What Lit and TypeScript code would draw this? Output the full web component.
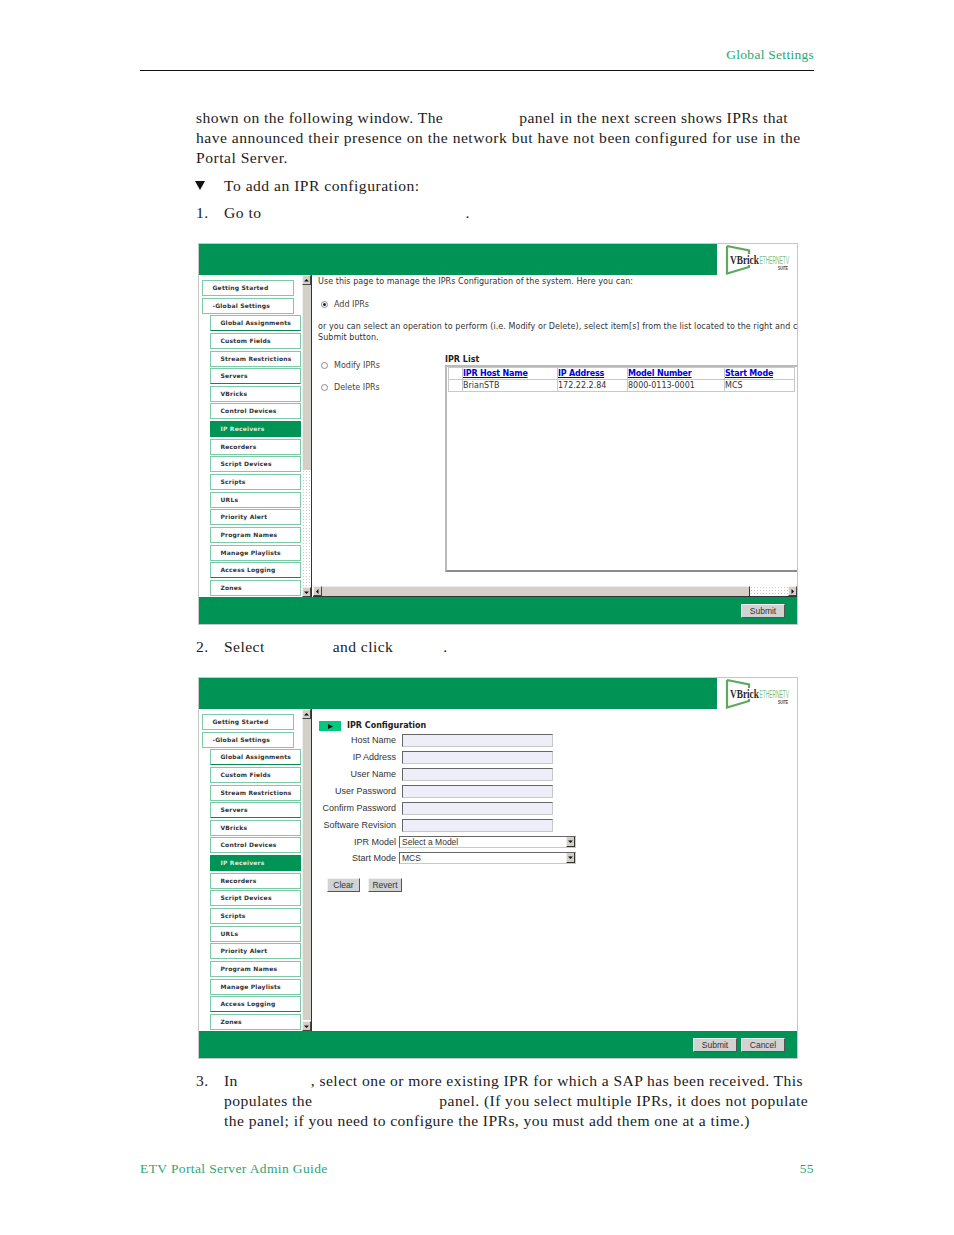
import { LitElement, html, css } from "lit";
import { customElement, property } from "lit/decorators.js";

const TOP = ["Getting Started", "-Global Settings"];
const SUB = ["Global Assignments", "Custom Fields", "Stream Restrictions", "Servers", "VBricks", "Control Devices", "IP Receivers", "Recorders", "Script Devices", "Scripts", "URLs", "Priority Alert", "Program Names", "Manage Playlists", "Access Logging", "Zones"];

const logo = html`<svg class="logo" viewBox="0 0 81 31" width="81" height="31" aria-label="VBrick EtherneTV Suite">
  <path d="M10 2 L32 6.5 V10 M32 21 V23 L10 29.5 V2" fill="none" stroke="#5fa95f" stroke-width="2.2"/>
  <text transform="translate(13 20) scale(1 1.3)" font-family="Liberation Serif, serif" font-weight="700" font-size="9.3" fill="#2b2b2b">VBrick</text>
  <text transform="translate(42.5 20) scale(1 2.3)" font-family="Liberation Sans, sans-serif" font-size="4.9" fill="#7dbd7d">ETHERNETV</text>
  <text transform="translate(61 26) scale(1 1.8)" font-family="Liberation Sans, sans-serif" font-weight="700" font-size="3.4" fill="#444">SUITE</text>
</svg>`;

const arrow = (d: string) => html`<svg width="5" height="5" viewBox="0 0 5 5"><path d="${d}" fill="#111"/></svg>`;

@customElement("portal-window")
class PortalWindow extends LitElement {
  @property({ type: Boolean }) hscroll = false;
  static styles = css`
    :host { display: flex; flex-direction: column; width: 600px; height: 382px; box-sizing: border-box; border: 1px solid #c6c6c6; background: #fff; overflow: hidden; }
    .head { display: flex; height: 31px; flex: none; }
    .green { flex: 1; background: #009356; }
    .logo { display: block; flex: none; margin-right: -1px; }
    .body { display: flex; height: 322px; flex: none; }
    .nav { width: 103px; flex: none; box-sizing: border-box; padding: 5px 0 0 3px; display: flex; flex-direction: column; gap: 1.65px; overflow: hidden; }
    .item { box-sizing: border-box; height: 16px; width: 92px; border: 1px solid #7ccba8; font: 700 6px/14px "DejaVu Sans", sans-serif; letter-spacing: .2px; color: #333; padding-left: 9.5px; white-space: nowrap; flex: none; }
    .item.sub { margin-left: 8px; width: 91px; }
    .item.dark { border-bottom-color: #078a52; }
    .item.on { background: #009356; border-color: #009356; color: #d8efe4; }
    .v { flex: none; display: flex; flex-direction: column; border-right: 1px solid #333; width: 9px; margin-right: 1px; }
    .btn { height: 10px; flex: none; box-sizing: border-box; background: #d4d0c8; border: 1px solid; border-color: #f4f2ee #444 #444 #f4f2ee; display: flex; align-items: center; justify-content: center; }
    .thumb { background: #d4d0c8; border-left: 1px solid #eee; box-sizing: border-box; }
    .track { flex: 1; background-color: #fff; background-image: radial-gradient(#cfccc4 .8px, transparent 1px); background-size: 3px 3px; }
    .main { flex: 1; min-width: 0; display: flex; flex-direction: column; }
    .content { flex: 1; min-height: 0; overflow: hidden; }
    .h { height: 10px; flex: none; display: flex; border-bottom: 1px solid #333; }
    .h .btn { width: 9px; height: 10px; }
    .h .thumb { width: 428px; border-left: 0; border-top: 1px solid #eee; border-right: 1px solid #333; }
    .foot { flex: 1; background: #009356; display: flex; justify-content: flex-end; align-items: center; gap: 4px; padding-right: 12px; }
  `;
  render() {
    return html`
      <div class="head"><div class="green"></div>${logo}</div>
      <div class="body">
        <div class="nav">
          ${TOP.map((t) => html`<div class="item">${t}</div>`)}
          ${SUB.map((t, i) => html`<div class="item sub ${t === "IP Receivers" ? "on" : ""} ${i === 0 || i === 3 || i === 14 ? "dark" : ""}">${t}</div>`)}
        </div>
        <div class="v">
          <div class="btn">${arrow("M0 3.5 L2.5 1 L5 3.5Z")}</div>
          <div class="thumb" style="height:${this.hscroll ? 185 : 301}px"></div>
          <div class="track"></div>
          <div class="btn">${arrow("M0 1.5 L2.5 4 L5 1.5Z")}</div>
        </div>
        <div class="main">
          <div class="content"><slot></slot></div>
          ${this.hscroll ? html`<div class="h">
            <div class="btn">${arrow("M3.5 0 L1 2.5 L3.5 5Z")}</div>
            <div class="thumb"></div>
            <div class="track"></div>
            <div class="btn">${arrow("M1.5 0 L4 2.5 L1.5 5Z")}</div>
          </div>` : ""}
        </div>
      </div>
      <div class="foot"><slot name="foot"></slot></div>
    `;
  }
}

@customElement("app-root")
export class AppRoot extends LitElement {
  static styles = css`
    :host { display: block; width: 954px; height: 1235px; background: #fff; overflow: hidden; font-family: "Liberation Serif", serif; color: #1c1c1c; }
    .page { padding: 47px 140px 0; box-sizing: border-box; height: 1235px; display: flex; flex-direction: column; }
    .top { height: 23px; text-align: right; border-bottom: 1px solid #111; font-size: 13.5px; letter-spacing: .27px; line-height: 16px; color: #2ba676; }
    .text { margin-left: 56px; font-size: 15.6px; letter-spacing: .5px; line-height: 20px; white-space: nowrap; }
    .tight { letter-spacing: .43px; }
    .gap { display: inline-block; }
    .first { margin-top: 37px; }
    .row { display: flex; }
    .mark { width: 28px; flex: none; }
    .tri { display: inline-block; width: 0; height: 0; border: 5.5px solid transparent; border-top: 9px solid #111; border-bottom: 0; margin-left: -1px; vertical-align: 1px; }
    .shot { margin-left: 58px; }
    .foot { display: flex; justify-content: space-between; font-size: 13.5px; letter-spacing: .38px; line-height: 16px; color: #2ba676; margin-top: 30px; }
    /* window contents */
    .copy { font: 8px/11px "DejaVu Sans", sans-serif; letter-spacing: .06px; color: #333; padding-left: 5px; white-space: nowrap; }
    .l1 { padding-top: 1px; }
    .radio { display: flex; align-items: center; gap: 6px; height: 11px; padding-left: 3px; font: 8px/11px "DejaVu Sans", sans-serif; color: #444; }
    .dot { width: 7px; height: 7px; border-radius: 50%; box-sizing: border-box; border: 1px solid #8a8a8a; background: #fff; display: flex; align-items: center; justify-content: center; }
    .dot.on::after { content: ""; width: 3px; height: 3px; border-radius: 50%; background: #222; }
    .ops { display: flex; margin-top: 16px; }
    .radios { width: 132px; flex: none; padding-left: 5px; box-sizing: border-box; padding-top: 1px; }
    .radios .radio + .radio { margin-top: 11px; }
    .list { flex: 1; margin-top: -4px; }
    .lt { font: 700 8px/10px "DejaVu Sans", sans-serif; color: #222; }
    .box { height: 207px; border: 2px solid #b9b9b9; border-right: 0; border-bottom-color: #8b8b8b; padding: 0 0 0 1px; margin-right: -4px; box-sizing: border-box; }
    table { border-collapse: collapse; table-layout: fixed; width: 346px; font: 8px/11px "DejaVu Sans", sans-serif; color: #333; }
    td { border: 1px solid #c9c9c9; height: 11px; padding: 0; white-space: nowrap; overflow: hidden; }
    a { color: #0000e0; font-weight: 700; text-decoration: underline; letter-spacing: -.2px; }
    .form { padding: 12px 0 0 6px; }
    .title { display: flex; align-items: center; height: 10px; font: 700 8px/10px "DejaVu Sans", sans-serif; color: #222; gap: 6px; }
    .bullet { width: 22px; height: 10px; background: #00c97f; display: flex; align-items: center; justify-content: center; }
    .fields { margin: 3px 0 0 -6px; display: grid; grid-template-columns: 83px auto; justify-content: start; row-gap: 4px; font: 9px/13px "Liberation Sans", sans-serif; color: #333; }
    .fields .lab { text-align: right; white-space: nowrap; }
    .input { margin-left: 6px; width: 151px; height: 13px; box-sizing: border-box; background: #eeeef8; border: 1px solid #c8c8c8; border-top-color: #666; border-left-color: #666; }
    .sel { margin: 0 0 0 3px; width: 177px; height: 12px; box-sizing: border-box; background: #fff; border: 1px solid #c8c8c8; border-top-color: #666; border-left-color: #666; font: 8.5px/10px "Liberation Sans", sans-serif; color: #333; padding-left: 2px; display: flex; justify-content: space-between; }
    .sel i { width: 9px; background: #d4d0c8; border-left: 1px solid #eee; border-right: 1px solid #333; border-bottom: 1px solid #333; display: flex; align-items: center; justify-content: center; flex: none; height: 10px; box-sizing: border-box; }
    .sp { height: 12px; line-height: 12px; }
    .acts { display: flex; gap: 8px; margin: 14px 0 0 8px; }
    .b { box-sizing: border-box; height: 14px; padding: 0; background: #d2d2d2; border: 1px solid; border-color: #f2f2f2 #555 #555 #f2f2f2; font: 8.5px/12px "Liberation Sans", sans-serif; color: #333; text-align: center; }
  `;
  render() {
    return html`<div class="page">
      <div class="top">Global Settings</div>
      <div class="text first">
        <div class="tight">shown on the following window. The<span class="gap" style="width:76px"></span>panel in the next screen shows IPRs that</div>
        <div>have announced their presence on the network but have not been configured for use in the</div>
        <div>Portal Server.</div>
      </div>
      <div class="text row" style="margin-top:8px"><div class="mark"><span class="tri"></span></div><div>To add an IPR configuration:</div></div>
      <div class="text row" style="margin-top:7px"><div class="mark">1.</div><div>Go to<span class="gap" style="width:204px"></span>.</div></div>
      <portal-window class="shot" hscroll style="margin-top:20px">
        <div class="copy l1">Use this page to manage the IPRs Configuration of the system. Here you can:</div>
        <div class="radios" style="padding-top:12px"><div class="radio"><span class="dot on"></span>Add IPRs</div></div>
        <div class="copy" style="margin-top:11px">or you can select an operation to perform (i.e. Modify or Delete), select item[s] from the list located to the right and click</div>
        <div class="copy">Submit button.</div>
        <div class="ops">
          <div class="radios">
            <div class="radio"><span class="dot"></span>Modify IPRs</div>
            <div class="radio"><span class="dot"></span>Delete IPRs</div>
          </div>
          <div class="list">
            <div class="lt">IPR List</div>
            <div class="box">
              <table>
                <colgroup><col style="width:14px"/><col style="width:95px"/><col style="width:70px"/><col style="width:97px"/><col style="width:70px"/></colgroup>
                <tr><td></td><td><a>IPR Host Name</a></td><td><a>IP Address</a></td><td><a>Model Number</a></td><td><a>Start Mode</a></td></tr>
                <tr><td></td><td>BrianSTB</td><td>172.22.2.84</td><td>8000-0113-0001</td><td>MCS</td></tr>
              </table>
            </div>
          </div>
        </div>
        <button class="b" slot="foot" style="width:44px">Submit</button>
      </portal-window>
      <div class="text row tight" style="margin-top:12px"><div class="mark">2.</div><div>Select<span class="gap" style="width:68px"></span>and click<span class="gap" style="width:50px"></span>.</div></div>
      <portal-window class="shot" style="margin-top:20px">
        <div class="form">
          <div class="title"><span class="bullet">${arrow("M0 0 L5 2.5 L0 5Z")}</span>IPR Configuration</div>
          <div class="fields">
            ${["Host Name", "IP Address", "User Name", "User Password", "Confirm Password", "Software Revision"].map((l) => html`<div class="lab">${l}</div><div class="input"></div>`)}
            <div class="lab sp">IPR Model</div><div class="sel">Select a Model<i>${arrow("M0 1.5 L2.5 4 L5 1.5Z")}</i></div>
            <div class="lab sp">Start Mode</div><div class="sel">MCS<i>${arrow("M0 1.5 L2.5 4 L5 1.5Z")}</i></div>
          </div>
          <div class="acts"><button class="b" style="width:33px">Clear</button><button class="b" style="width:34px">Revert</button></div>
        </div>
        <button class="b" slot="foot" style="width:44px">Submit</button>
        <button class="b" slot="foot" style="width:44px">Cancel</button>
      </portal-window>
      <div class="text row tight" style="margin-top:12px"><div class="mark">3.</div><div>
        <div>In<span class="gap" style="width:73px"></span>, select one or more existing IPR for which a SAP has been received. This</div>
        <div>populates the<span class="gap" style="width:127px"></span>panel. (If you select multiple IPRs, it does not populate</div>
        <div>the panel; if you need to configure the IPRs, you must add them one at a time.)</div>
      </div></div>
      <div class="foot"><span>ETV Portal Server Admin Guide</span><span>55</span></div>
    </div>`;
  }
}
